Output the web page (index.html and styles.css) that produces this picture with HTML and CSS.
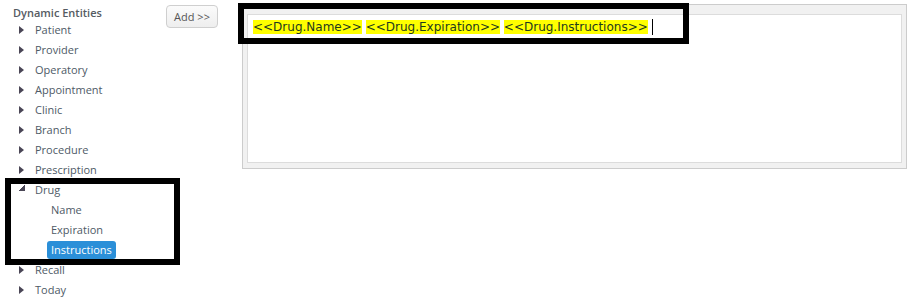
FILE: index.html
```html
<!DOCTYPE html>
<html>
<head>
<meta charset="utf-8">
<link rel="stylesheet" href="styles.css">
</head>
<body>
<div class="page">
  <div class="tree">
    <div class="tree-title">Dynamic Entities</div>
    <ul class="nodes">
      <li class="node"><span class="tri"></span><span class="label">Patient</span></li>
      <li class="node"><span class="tri"></span><span class="label">Provider</span></li>
      <li class="node"><span class="tri"></span><span class="label">Operatory</span></li>
      <li class="node"><span class="tri"></span><span class="label">Appointment</span></li>
      <li class="node"><span class="tri"></span><span class="label">Clinic</span></li>
      <li class="node"><span class="tri"></span><span class="label">Branch</span></li>
      <li class="node"><span class="tri"></span><span class="label">Procedure</span></li>
      <li class="node"><span class="tri"></span><span class="label">Prescription</span></li>
      <li class="node"><span class="tri tri-open"></span><span class="label">Drug</span></li>
      <li class="child"><span class="label">Name</span></li>
      <li class="child"><span class="label">Expiration</span></li>
      <li class="child"><span class="label selected">Instructions</span></li>
      <li class="node"><span class="tri"></span><span class="label">Recall</span></li>
      <li class="node"><span class="tri"></span><span class="label">Today</span></li>
    </ul>
  </div>
  <div class="actions">
    <button class="add-btn">Add &gt;&gt;</button>
  </div>
  <div class="editor">
    <div class="editor-body">
      <span class="token">&lt;&lt;Drug.Name&gt;&gt;</span> <span class="token">&lt;&lt;Drug.Expiration&gt;&gt;</span> <span class="token">&lt;&lt;Drug.Instructions&gt;&gt;</span><span class="caret"></span>
    </div>
  </div>
</div>
<div class="mark mark-editor"></div>
<div class="mark mark-tree"></div>
</body>
</html>
```
FILE: styles.css
```css
html, body {
  margin: 0;
  padding: 0;
  background: #fff;
}
.page {
  display: flex;
  align-items: flex-start;
  font-family: "Open Sans", "DejaVu Sans", sans-serif;
  font-size: 11px;
  color: #4e5a66;
}
.tree {
  width: 153px;
  padding: 5px 0 0 13px;
}
.tree-title {
  line-height: 15px;
  font-weight: 600;
  color: #555b62;
}
.nodes {
  list-style: none;
  margin: 0;
  padding: 0;
}
.node, .child {
  height: 20px;
  line-height: 20px;
  display: flex;
  align-items: center;
}
.node {
  padding-left: 6px;
}
.child {
  padding-left: 34px;
}
.tri {
  width: 0;
  height: 0;
  border-top: 4px solid transparent;
  border-bottom: 4px solid transparent;
  border-left: 5px solid #4a4656;
  margin-right: 11px;
}
.tri.tri-open {
  border: none;
  width: 6px;
  height: 6px;
  margin-right: 10px;
  margin-top: -4px;
  background: linear-gradient(to bottom right, transparent 50%, #4a4656 50%);
}
.label {
  display: inline-block;
}
.child .label {
  padding: 0 4px;
  line-height: 18px;
  border-radius: 3px;
}
.child .label.selected {
  background: #2b8fd8;
  color: #fff;
}
.actions {
  padding-top: 5px;
  margin-right: 24px;
}
.add-btn {
  width: 52px;
  height: 23px;
  padding: 0;
  border: 1px solid #cfcfcf;
  border-radius: 4px;
  background: linear-gradient(#fbfbfb, #eeeeee);
  font-family: "Open Sans", "DejaVu Sans", sans-serif;
  font-size: 11px;
  color: #555;
}
.editor {
  margin-top: 4px;
  border: 1px solid #cccccc;
  background: #f1f1f1;
  padding: 9px 4px 5px 4px;
  box-sizing: border-box;
  width: 665px;
  height: 165px;
}
.editor-body {
  height: 100%;
  box-sizing: border-box;
  border: 1px solid #dcdcdc;
  background: #fff;
  padding: 4px 5px;
  font-family: "DejaVu Sans", Verdana, sans-serif;
  font-size: 12px;
  line-height: 16px;
  color: #1e3a1e;
  white-space: nowrap;
}
.token {
  background: #ffff00;
}
.caret {
  display: inline-block;
  width: 1px;
  height: 16px;
  background: #000;
  margin-left: 4px;
  vertical-align: -4px;
}
.mark {
  position: absolute;
  border: 6px solid #000;
  box-sizing: border-box;
}
.mark-editor {
  left: 238px;
  top: 3px;
  width: 451px;
  height: 41px;
}
.mark-tree {
  left: 5px;
  top: 178px;
  width: 175px;
  height: 87px;
}
```
